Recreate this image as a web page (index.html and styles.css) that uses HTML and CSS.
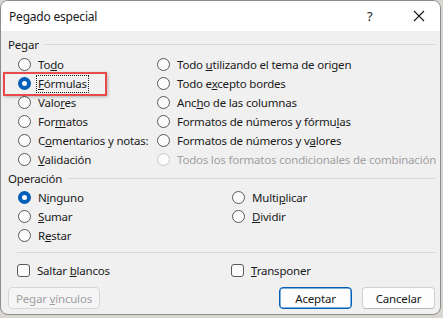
FILE: index.html
```html
<!DOCTYPE html>
<html lang="es">
<head>
    <meta charset="UTF-8">
    <title>Pegado especial</title>
    <link rel="stylesheet" href="styles.css">
</head>
<body>
    <div class="dialog">
        <div class="titlebar">
            <span class="title">Pegado especial</span>
            <span class="help">?</span>
            <svg class="close" width="12" height="12" viewBox="0 0 12 12"><path d="M1 1L11 11M11 1L1 11" stroke="#1a1a1a" stroke-width="1.1"/></svg>
        </div>
        <div class="content">
            <div class="group-head"><span>Pegar</span><i></i></div>
            <div class="paste-grid">
                <div class="col">
                    <label class="opt"><span class="radio"></span><span>To<u>d</u>o</span></label>
                    <label class="opt"><span class="radio on"></span><span class="focus"><u>F</u>órmulas</span></label>
                    <label class="opt"><span class="radio"></span><span>Valo<u>r</u>es</span></label>
                    <label class="opt"><span class="radio"></span><span>For<u>m</u>atos</span></label>
                    <label class="opt"><span class="radio"></span><span>C<u>o</u>mentarios y notas:</span></label>
                    <label class="opt"><span class="radio"></span><span><u>V</u>alidación</span></label>
                </div>
                <div class="col">
                    <label class="opt"><span class="radio"></span><span>Todo <u>u</u>tilizando el tema de origen</span></label>
                    <label class="opt"><span class="radio"></span><span>Todo e<u>x</u>cepto bordes</span></label>
                    <label class="opt"><span class="radio"></span><span>Anc<u>h</u>o de las columnas</span></label>
                    <label class="opt"><span class="radio"></span><span>Formatos de números y fórmu<u>l</u>as</span></label>
                    <label class="opt"><span class="radio"></span><span>Formatos de números y v<u>a</u>lores</span></label>
                    <label class="opt disabled"><span class="radio"></span><span>Todos los formatos condicionales de combinación</span></label>
                </div>
            </div>
            <div class="group-head op"><span>Operación</span><i></i></div>
            <div class="op-grid">
                <div class="col">
                    <label class="opt"><span class="radio on"></span><span>N<u>i</u>nguno</span></label>
                    <label class="opt"><span class="radio"></span><span><u>S</u>umar</span></label>
                    <label class="opt"><span class="radio"></span><span>R<u>e</u>star</span></label>
                </div>
                <div class="col">
                    <label class="opt"><span class="radio"></span><span>Multi<u>p</u>licar</span></label>
                    <label class="opt"><span class="radio"></span><span><u>D</u>ividir</span></label>
                </div>
            </div>
            <div class="sep"></div>
            <div class="checks">
                <label class="opt"><span class="check"></span><span>Saltar <u>b</u>lancos</span></label>
                <label class="opt"><span class="check"></span><span><u>T</u>ransponer</span></label>
            </div>
            <div class="buttons">
                <button class="btn disabled">Pegar <u>v</u>ínculos</button>
                <span class="spacer"></span>
                <button class="btn primary">Aceptar</button>
                <button class="btn">Cancelar</button>
            </div>
            <div class="highlight"></div>
        </div>
    </div>
</body>
</html>
```

FILE: styles.css
```css
body {
    margin: 0;
    width: 443px;
    height: 318px;
    background: #d9d6d2;
    font-family: "Noto Sans", "Open Sans", sans-serif;
    font-size: 11.5px;
    letter-spacing: -0.2px;
    color: #1a1a1a;
    overflow: hidden;
}
.dialog {
    width: 439px;
    height: 313px;
    border: 1px solid #8c8c8c;
    border-radius: 8px;
    overflow: hidden;
    background: #f0f0f0;
    display: flex;
    flex-direction: column;
}
.titlebar {
    height: 30px;
    background: #fff;
    display: flex;
    align-items: center;
    padding-left: 8px;
    flex-shrink: 0;
    font-size: 12px;
}
.title {
    flex: 1;
}
.help {
    width: 12px;
    margin-right: 34px;
    font-size: 13px;
}
.close {
    margin-right: 15px;
}
.content {
    position: relative;
    flex: 1;
    display: flex;
    flex-direction: column;
}
.group-head {
    display: flex;
    align-items: center;
    height: 16px;
    margin: 5px 5px 3px 7px;
    gap: 6px;
}
.group-head i {
    flex: 1;
    height: 1px;
    background: #d8d8d8;
}
.group-head.op {
    margin-top: 1px;
    margin-bottom: 2px;
}
.paste-grid, .op-grid {
    display: grid;
    padding-left: 17px;
}
.paste-grid {
    grid-template-columns: 139px 1fr;
}
.op-grid {
    grid-template-columns: 214px 1fr;
}
.col {
    display: flex;
    flex-direction: column;
}
.opt {
    height: 19px;
    display: flex;
    align-items: center;
    white-space: nowrap;
}
.radio {
    width: 11px;
    height: 11px;
    border: 1px solid #5a5a5a;
    border-radius: 50%;
    background: #fbfbfb;
    margin-right: 7px;
    flex-shrink: 0;
    box-sizing: content-box;
}
.radio.on {
    width: 5px;
    height: 5px;
    border: 4px solid #005fb8;
    background: #fff;
}
.disabled {
    color: #a0a0a0;
}
.opt.disabled .radio {
    border-color: #c8c8c8;
}
.focus {
    outline: 1px dotted #222;
    outline-offset: 0;
    padding: 0 1px;
    margin-left: -1px;
    line-height: 16px;
}
.sep {
    height: 1px;
    background: #d8d8d8;
    margin: 7px 5px 8px 16px;
}
.checks {
    display: grid;
    grid-template-columns: 214px 1fr;
    padding-left: 16px;
}
.check {
    width: 11px;
    height: 11px;
    border: 1px solid #5a5a5a;
    border-radius: 3px;
    background: #fbfbfb;
    margin-right: 7px;
}
.buttons {
    display: flex;
    align-items: center;
    gap: 10px;
    padding: 0 5px 0 7px;
    margin-top: 7px;
}
.spacer {
    flex: 1;
}
.btn {
    height: 22px;
    width: 73px;
    font-family: inherit;
    font-size: 11.5px;
    letter-spacing: inherit;
    color: #1a1a1a;
    background: #fdfdfd;
    border: 1px solid #d0d0d0;
    border-bottom-color: #b8b8b8;
    border-radius: 4px;
    padding: 0;
}
.btn.disabled {
    width: 92px;
    color: #a0a0a0;
    background: #f5f5f5;
    border-color: #d6d6d6;
}
.btn.primary {
    border: 1px solid #005fb8;
    box-shadow: inset 0 0 0 0.5px #005fb8;
}
.highlight {
    position: absolute;
    left: 2px;
    top: 41px;
    width: 100px;
    height: 20px;
    border: 2px solid #e8494d;
    box-shadow: 1px 1px 3px rgba(0,0,0,0.25);
}
```
